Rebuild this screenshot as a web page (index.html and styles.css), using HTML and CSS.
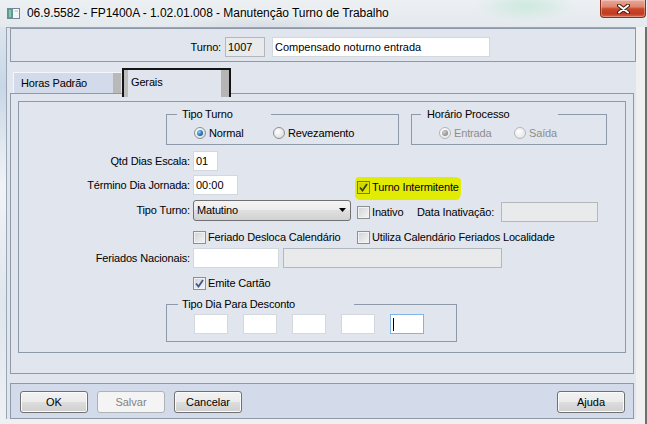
FILE: index.html
```html
<!DOCTYPE html>
<html lang="pt-BR">
<head>
  <meta charset="UTF-8">
  <title>Manutenção Turno de Trabalho</title>
  <link rel="stylesheet" href="styles.css">
</head>
<body>
  <div class="window">
    <!-- Title bar -->
    <div class="titlebar">
      <svg class="app-icon" width="13" height="11" viewBox="0 0 13 11">
        <rect x="0.5" y="0.5" width="12" height="10" fill="#f3f5f7" stroke="#76869a"/>
        <rect x="1" y="1" width="5" height="9" fill="#5a9e8e"/>
        <rect x="2" y="2" width="2" height="7" fill="#8cc6b4"/>
        <line x1="7.5" y1="3" x2="11" y2="3" stroke="#b6c0ca"/>
      </svg>
      <span class="title">06.9.5582 - FP1400A - 1.02.01.008 - Manutenção Turno de Trabalho</span>
      <div class="close-btn">
        <svg width="13" height="10" viewBox="0 0 13 10">
          <path d="M2 1.5 L11 8.5 M11 1.5 L2 8.5" stroke="#4b1b12" stroke-width="4" stroke-linecap="round"/>
          <path d="M2 1.5 L11 8.5 M11 1.5 L2 8.5" stroke="#ffffff" stroke-width="2" stroke-linecap="round"/>
        </svg>
      </div>
    </div>

    <div class="frame">
      <div class="frame-left"></div>
      <div class="client">
        <!-- Turno header -->
        <div class="turno-panel">
          <span class="turno-label">Turno:</span>
          <input class="txt gray w-code" type="text" value="1007" readonly>
          <input class="txt w-desc" type="text" value="Compensado noturno entrada" readonly>
        </div>

        <!-- Tabs -->
        <div class="tab-strip">
          <div class="tab">Horas Padrão</div>
          <div class="tab active">Gerais</div>
        </div>

        <div class="tab-page">
          <div class="page-group">
            <div class="group-row">
              <div class="groupbox tipo-turno">
                <span class="legend lg-tipo">Tipo Turno</span>
                <label class="radio-opt w-normal"><span class="radio on"></span>Normal</label>
                <label class="radio-opt"><span class="radio"></span>Revezamento</label>
              </div>
              <div class="groupbox horario">
                <span class="legend lg-horario">Horário Processo</span>
                <label class="radio-opt w-entrada disabled"><span class="radio on"></span>Entrada</label>
                <label class="radio-opt disabled"><span class="radio"></span>Saída</label>
              </div>
            </div>

            <div class="form-row r-qtd">
              <span class="lbl">Qtd Dias Escala:</span>
              <input class="txt w-qtd" type="text" value="01">
            </div>

            <div class="form-row r-termino">
              <span class="lbl">Término Dia Jornada:</span>
              <div class="col-a"><input class="txt w-hora" type="text" value="00:00"></div>
              <div class="col-b">
                <div class="marker">
                  <span class="chk"><svg width="9" height="9" viewBox="0 0 9 9"><path d="M1 4.5 L3.5 7.5 L8 1" fill="none" stroke="#3b430c" stroke-width="1.8"/></svg></span>
                  Turno Intermitente
                </div>
              </div>
            </div>

            <div class="form-row r-tipo">
              <span class="lbl">Tipo Turno:</span>
              <div class="col-a">
                <div class="combo">
                  Matutino
                  <svg class="combo-arrow" width="7" height="4" viewBox="0 0 7 4"><path d="M0 0 H7 L3.5 4 Z" fill="#000"/></svg>
                </div>
              </div>
              <div class="col-b shifted">
                <span class="chk"></span><span class="inativo">Inativo</span>
                <span class="lbl-inline">Data Inativação:</span>
                <input class="txt gray w-data" type="text" value="" disabled>
              </div>
            </div>

            <div class="form-row r-feriado">
              <span class="lbl"></span>
              <div class="col-a"><span class="chk"></span>Feriado Desloca Calendário</div>
              <div class="col-b"><span class="chk"></span>Utiliza Calendário Feriados Localidade</div>
            </div>

            <div class="form-row r-nac">
              <span class="lbl">Feriados Nacionais:</span>
              <input class="txt w-nac" type="text" value="">
              <input class="txt gray w-nac-desc" type="text" value="" disabled>
            </div>

            <div class="form-row r-emite">
              <span class="lbl"></span>
              <div class="col-a">
                <span class="chk"><svg width="9" height="9" viewBox="0 0 9 9"><path d="M1 4.5 L3.5 7.5 L8 1" fill="none" stroke="#3c568e" stroke-width="1.8"/></svg></span>Emite Cartão
              </div>
            </div>

            <div class="groupbox tipo-dia">
              <span class="legend lg-dia">Tipo Dia Para Desconto</span>
              <input class="dia" type="text" value="">
              <input class="dia" type="text" value="">
              <input class="dia" type="text" value="">
              <input class="dia" type="text" value="">
              <input class="dia focus" type="text" value="">
            </div>
          </div>
        </div>

        <!-- Button bar -->
        <div class="button-bar">
          <button class="btn">OK</button>
          <button class="btn" disabled>Salvar</button>
          <button class="btn">Cancelar</button>
          <button class="btn btn-help">Ajuda</button>
        </div>
      </div>
      <div class="frame-right"></div>
    </div>
  </div>
</body>
</html>
```

FILE: styles.css
```css
/* Windows form look */
body {
  margin: 0;
  font-family: "Liberation Sans", Arial, sans-serif;
  font-size: 11px;
  letter-spacing: -0.15px;
  color: #000;
  background: #f0f0f0;
}

.window {
  width: 647px;
  height: 424px;
  overflow: hidden;
  display: flex;
  flex-direction: column;
  background: #f0f0f0;
}

/* title bar */
.titlebar {
  height: 27px;
  flex: none;
  display: flex;
  align-items: flex-start;
  background:
    radial-gradient(ellipse 50px 16px at 525px 6px, #cde9dd, rgba(205, 233, 221, 0)),
    radial-gradient(ellipse 90px 10px at 260px 26px, #d8dee4, rgba(216, 222, 228, 0)),
    linear-gradient(#ecf0f3, #e4e9ed);
}

.app-icon {
  margin: 8px 0 0 7px;
  flex: none;
}

.title {
  margin: 6px 0 0 7px;
  font-size: 12px;
  line-height: 15px;
  letter-spacing: -0.05px;
  white-space: nowrap;
  text-shadow: 0 0 5px #fff;
}

.close-btn {
  margin-left: auto;
  margin-right: 1px;
  width: 46px;
  height: 18px;
  box-sizing: border-box;
  border: 1px solid #8a2f1e;
  border-top: 0;
  border-radius: 0 0 4px 4px;
  background: linear-gradient(#eaa898 0%, #de8670 40%, #c9482d 52%, #c23b20 80%, #d6654a 100%);
  box-shadow: inset 0 0 0 1px rgba(255, 255, 255, 0.3);
  display: flex;
  justify-content: center;
  align-items: center;
}

/* window frame */
.frame {
  flex: 1;
  display: flex;
  align-items: flex-start;
}

.frame-left {
  width: 6px;
  align-self: stretch;
  background: linear-gradient(#dbe5ef, #c8d7e6 15%, #f1f4f7 40%, #dfe6ed 70%, #eef1f4);
}

.frame-right {
  flex: 1;
  align-self: stretch;
  background: #f0f0f0;
  border-right: 2px solid #707070;
}

.client {
  width: 630px;
  height: 392px;
  box-sizing: border-box;
  border-left: 1px solid #9aa5b3;
  border-top: 1px solid #9aa5b3;
  background: #e1e5ee;
  display: flex;
  flex-direction: column;
}

/* inputs */
.txt {
  box-sizing: border-box;
  height: 20px;
  margin: 0;
  padding: 0 2px;
  border: 1px solid #d3d7de;
  background: #fff;
  font: inherit;
  color: #000;
  outline: none;
  flex: none;
}

.txt.gray {
  background: #e9eaec;
  border-color: #b3b8bf;
}

/* turno header */
.turno-panel {
  margin-left: 3px;
  width: 626px;
  height: 34px;
  box-sizing: border-box;
  border: 1px solid #8e99a9;
  padding-top: 8px;
  display: flex;
  align-items: flex-start;
}

.turno-label {
  width: 210px;
  margin-right: 4px;
  text-align: right;
  line-height: 20px;
}

.w-code { width: 40px; margin-right: 7px; }
.w-desc { width: 218px; }

/* tabs */
.tab-strip {
  height: 31px;
  flex: none;
  display: flex;
  align-items: flex-end;
  padding-left: 6px;
}

.tab {
  width: 108px;
  height: 21px;
  box-sizing: border-box;
  padding-left: 7px;
  line-height: 20px;
  background: #d3dbeb;
  border-top: 1px solid #f4f6fa;
  border-left: 1px solid #f4f6fa;
  box-shadow: inset -8px 0 0 #b9b9b9;
}

.tab.active {
  position: relative;
  z-index: 1;
  width: 109px;
  height: 29px;
  margin-left: 1px;
  margin-bottom: -4px;
  border: 2px solid #141414;
  border-bottom: 0;
  line-height: 24px;
  background: #e0e4ed;
  box-shadow: inset 4px 0 0 #bdbdbd, inset -8px 0 0 #b5b5b5;
}

.tab-page {
  margin-left: 3px;
  width: 624px;
  height: 281px;
  flex: none;
  box-sizing: border-box;
  border: 1px solid #8e99a9;
  padding: 7px 7px 0 7px;
}

.page-group {
  height: 252px;
  box-sizing: border-box;
  border: 1px solid #8e99a9;
  display: flex;
  flex-direction: column;
}

/* group boxes */
.group-row {
  margin-top: 12px;
  padding-left: 147px;
  height: 31px;
  display: flex;
}

.groupbox {
  position: relative;
  box-sizing: border-box;
  border: 1px solid #8e99a9;
  height: 31px;
  padding: 10px 0 0 27px;
  display: flex;
  align-items: flex-start;
}

.tipo-turno { width: 233px; }
.horario { width: 196px; margin-left: 12px; }

.legend {
  position: absolute;
  top: -7px;
  height: 13px;
  line-height: 13px;
  box-sizing: border-box;
  background: #e1e5ee;
}

.lg-tipo { left: 10px; width: 94px; padding-left: 5px; }
.lg-horario { left: 9px; width: 137px; padding-left: 6px; }
.lg-dia { left: 11px; width: 176px; padding-left: 4px; }

.radio-opt {
  display: flex;
  align-items: center;
  height: 16px;
}

.w-normal { width: 79px; }
.w-entrada { width: 75px; }

.radio-opt.disabled { color: #8d8d8d; }

.radio {
  position: relative;
  width: 12px;
  height: 12px;
  margin-right: 3px;
  box-sizing: border-box;
  border: 1px solid #8e8f8f;
  border-radius: 50%;
  background: radial-gradient(circle at 35% 35%, #ffffff, #dcdde0 80%);
}

.radio.on::after {
  content: "";
  position: absolute;
  left: 2px;
  top: 2px;
  width: 6px;
  height: 6px;
  border-radius: 50%;
  background: radial-gradient(circle at 35% 35%, #8fd2fb, #1b6cb6 60%, #0d4a86);
}

.disabled .radio {
  border-color: #b5b6b8;
  background: radial-gradient(circle at 35% 35%, #ffffff, #e6e6e8 80%);
}

.disabled .radio.on::after {
  background: radial-gradient(circle at 35% 35%, #d0d0d0, #8e8e8e 70%);
}

/* form rows */
.form-row {
  height: 20px;
  flex: none;
  display: flex;
  align-items: center;
}

.lbl {
  width: 171px;
  margin-right: 3px;
  text-align: right;
  flex: none;
}

.col-a {
  width: 164px;
  flex: none;
  display: flex;
  align-items: center;
}

.col-b {
  display: flex;
  align-items: center;
}

.col-b.shifted { margin-top: 4px; }

.r-qtd { margin-top: 6px; }
.r-termino { margin-top: 4px; }
.r-tipo { margin-top: 5px; }
.r-feriado { margin-top: 9px; height: 16px; }
.r-nac { margin-top: 3px; }
.r-emite { margin-top: 7px; height: 16px; }

.w-qtd { width: 25px; }
.w-hora { width: 45px; }
.w-data { width: 97px; }
.w-nac { width: 86px; margin-right: 4px; }
.w-nac-desc { width: 219px; }

.inativo {
  width: 45px;
  flex: none;
}

.lbl-inline {
  width: 84px;
  flex: none;
}

/* checkbox */
.chk {
  width: 13px;
  height: 13px;
  margin-right: 2px;
  flex: none;
  box-sizing: border-box;
  border: 1px solid #8e8f8f;
  background: linear-gradient(135deg, #cfd2d7, #f6f6f6);
  box-shadow: inset 0 0 0 1px #f2f2f2;
  display: flex;
  align-items: center;
  justify-content: center;
}

/* yellow highlighter over Turno Intermitente */
.marker {
  margin: 6px 0 0 -2px;
  padding: 4px 2px 6px 2px;
  line-height: 13px;
  display: flex;
  align-items: center;
  background: #e2eb04;
  border-radius: 3px 8px 4px 6px / 6px 3px 8px 4px;
}

.marker .chk {
  border-color: #7b8000;
  background: linear-gradient(135deg, #c4cb00, #e6ee00);
  box-shadow: inset 0 0 0 1px #dde500;
}

/* combo */
.combo {
  width: 158px;
  height: 21px;
  box-sizing: border-box;
  border: 1px solid #707070;
  border-radius: 3px;
  padding-left: 3px;
  background: linear-gradient(#f4f4f4, #ececec 50%, #dfdfdf 50%, #d2d2d2);
  display: flex;
  align-items: center;
}

.combo-arrow {
  margin-left: auto;
  margin-right: 4px;
}

/* tipo dia */
.tipo-dia {
  margin: 13px 0 0 147px;
  width: 291px;
  height: 38px;
  flex: none;
  padding: 9px 0 0 27px;
}

.dia {
  width: 34px;
  height: 20px;
  margin: 0 15px 0 0;
  padding: 0;
  box-sizing: border-box;
  border: 1px solid #d3d8df;
  background: #fff;
  outline: none;
}

.dia.focus {
  border-color: #7eb4ea;
  background: linear-gradient(#000, #000) no-repeat 2px 3px / 1px 13px, #fff;
}

/* bottom buttons */
.button-bar {
  margin: 9px 0 0 3px;
  width: 624px;
  height: 36px;
  flex: none;
  box-sizing: border-box;
  border: 1px solid #8e99a9;
  background: #d3dbeb;
  padding: 7px 8px 0 9px;
  display: flex;
  align-items: flex-start;
}

.btn {
  width: 68px;
  height: 22px;
  margin: 0 9px 0 0;
  padding: 0;
  box-sizing: border-box;
  border: 1px solid #707070;
  border-radius: 3px;
  background: linear-gradient(#f2f2f2, #ebebeb 50%, #dddddd 50%, #cfcfcf);
  box-shadow: inset 0 0 0 1px #fbfbfb;
  font: inherit;
  color: #000;
}

.btn:disabled {
  border-color: #adb2b5;
  background: #f4f4f4;
  box-shadow: none;
  color: #838383;
}

.btn-help {
  margin-left: auto;
  margin-right: 0;
}
```
